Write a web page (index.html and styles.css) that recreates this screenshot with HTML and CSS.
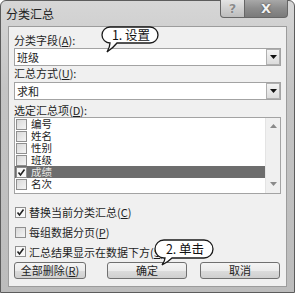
FILE: index.html
```html
<!DOCTYPE html>
<html lang="zh-CN">
<head>
    <meta charset="UTF-8">
    <title>分类汇总</title>
    <link rel="stylesheet" href="styles.css">
</head>
<body>
    <div class="window">
        <div class="titlebar">
            <span class="title">分类汇总</span>
            <div class="caption-btns">
                <div class="cap help">?</div>
                <div class="cap close">X</div>
            </div>
        </div>

        <div class="panel">
            <div class="label l1">分类字段(<u>A</u>):</div>
            <div class="combo">
                <span class="combo-text">班级</span>
                <span class="drop"><svg width="7" height="4" viewBox="0 0 7 4"><path d="M0 0H7L3.5 4Z" fill="#111"/></svg></span>
            </div>

            <div class="label l2">汇总方式(<u>U</u>):</div>
            <div class="combo">
                <span class="combo-text">求和</span>
                <span class="drop"><svg width="7" height="4" viewBox="0 0 7 4"><path d="M0 0H7L3.5 4Z" fill="#111"/></svg></span>
            </div>

            <div class="label l3">选定汇总项(<u>D</u>):</div>
            <div class="listbox">
                <div class="items">
                    <div class="item"><span class="cb"></span>编号</div>
                    <div class="item"><span class="cb"></span>姓名</div>
                    <div class="item"><span class="cb"></span>性别</div>
                    <div class="item"><span class="cb"></span>班级</div>
                    <div class="item selected"><span class="cb checked"><svg width="9" height="9" viewBox="0 0 9 9"><path d="M1.5 4.5L3.5 7L7.5 1.5" fill="none" stroke="#222" stroke-width="1.6"/></svg></span>成绩</div>
                    <div class="item"><span class="cb"></span>名次</div>
                </div>
                <div class="vscroll">
                    <svg width="7" height="4" viewBox="0 0 7 4"><path d="M0 4H7L3.5 0Z" fill="#8a8a8a"/></svg>
                    <svg width="7" height="4" viewBox="0 0 7 4"><path d="M0 0H7L3.5 4Z" fill="#8a8a8a"/></svg>
                </div>
            </div>

            <div class="options">
                <div class="opt"><span class="cb checked"><svg width="9" height="9" viewBox="0 0 9 9"><path d="M1.5 4.5L3.5 7L7.5 1.5" fill="none" stroke="#222" stroke-width="1.6"/></svg></span>替换当前分类汇总(<u>C</u>)</div>
                <div class="opt"><span class="cb"></span>每组数据分页(<u>P</u>)</div>
                <div class="opt last"><span class="cb checked"><svg width="9" height="9" viewBox="0 0 9 9"><path d="M1.5 4.5L3.5 7L7.5 1.5" fill="none" stroke="#222" stroke-width="1.6"/></svg></span>汇总结果显示在数据下方(<u>S</u>)</div>
            </div>

            <div class="buttons">
                <div class="btn b1">全部删除(<u>R</u>)</div>
                <div class="btn b2">确定</div>
                <div class="btn b3">取消</div>
            </div>
        </div>

        <!-- callouts over the dialog -->
        <div class="callout c1">
            <svg width="58" height="28" viewBox="0 0 58 28"><path d="M9 1H49A8 8 0 0 1 49 17H16Q12 22 6 26Q9 21 9 17A8 8 0 0 1 9 1Z" fill="#fff" stroke="#1a1a1a" stroke-width="1.3"/></svg>
            <span class="callout-text">1. 设置</span>
        </div>
        <div class="callout c2">
            <svg width="60" height="28" viewBox="0 0 60 28"><path d="M10 1H50A9 9 0 0 1 50 19H18Q14 23 8 26Q11 22 11 19H10A9 9 0 0 1 10 1Z" fill="#fff" stroke="#1a1a1a" stroke-width="1.3"/></svg>
            <span class="callout-text">2. 单击</span>
        </div>
    </div>
</body>
</html>
```

FILE: styles.css
```css
body {
    margin: 0;
    background-color: #fff;
    font-family: "Noto Sans CJK SC", "DejaVu Sans", sans-serif;
    font-size: 11px;
    color: #1e1e1e;
}
u {
    text-decoration: underline;
    text-underline-offset: 1px;
}
.window {
    position: relative;
    width: 295px;
    height: 293px;
    box-sizing: border-box;
    border: 1px solid #5c5c5c;
    border-radius: 6px 6px 0 0;
    background: linear-gradient(#d6d6d6, #c4c4c4 30%, #bcbcbc);
    padding: 0 7px 5px 7px;
}
.titlebar {
    height: 25px;
    margin: 0 -7px;
    display: flex;
    justify-content: space-between;
    align-items: flex-start;
}
.title {
    padding-left: 5px;
    line-height: 25px;
    font-size: 12px;
    color: #222;
}
.caption-btns {
    display: flex;
    margin-top: -1px;
    margin-right: 6px;
}
.cap {
    height: 18px;
    box-sizing: border-box;
    border: 1px solid #666;
    border-top: none;
    text-align: center;
    line-height: 17px;
    font-family: "DejaVu Sans", sans-serif;
    font-weight: bold;
}
.help {
    width: 25px;
    border-radius: 0 0 0 4px;
    background: linear-gradient(#e4e4e4, #cfcfcf 50%, #bdbdbd);
    color: #8a8a8a;
    font-size: 13px;
    text-shadow: 0 0 1px #fff;
}
.close {
    width: 43px;
    border-left: none;
    border-radius: 0 0 4px 0;
    background: linear-gradient(#a8a8a8, #8c8c8c 50%, #7a7a7a);
    color: #f2f2f2;
    font-size: 13px;
    text-shadow: 0 0 2px #333;
}
.panel {
    height: 261px;
    box-sizing: border-box;
    border: 1px solid #9c9c9c;
    background-color: #f0f0f0;
    padding: 0 5px;
}
.label {
    line-height: 14px;
    white-space: nowrap;
}
.l1 {
    margin-top: 6px;
    height: 15px;
    line-height: 15px;
}
.l2 {
    height: 16px;
}
.l3 {
    height: 14px;
    padding-top: 3px;
}
.combo {
    height: 18px;
    box-sizing: border-box;
    border: 1px solid #a3a3a3;
    background-color: #fff;
    display: flex;
    align-items: center;
}
.combo-text {
    padding-left: 2px;
    line-height: 16px;
}
.drop {
    margin-left: auto;
    width: 14px;
    height: 16px;
    box-sizing: border-box;
    border: 1px solid #b0b0b0;
    background: linear-gradient(#f4f4f4, #dcdcdc);
    display: flex;
    align-items: center;
    justify-content: center;
}
.listbox {
    height: 77px;
    box-sizing: border-box;
    border: 1px solid #a3a3a3;
    background-color: #fff;
    display: flex;
    overflow: hidden;
}
.items {
    flex: 1;
}
.item {
    height: 12px;
    line-height: 12px;
    display: flex;
    align-items: center;
    padding-left: 1px;
    white-space: nowrap;
    font-family: "Liberation Sans", "Noto Sans CJK SC", sans-serif;
    font-size: 10.5px;
}
.item.selected {
    background-color: #6d6d6d;
    color: #e6e6e6;
}
.cb {
    width: 11px;
    height: 11px;
    box-sizing: border-box;
    border: 1px solid #8f8f8f;
    background: linear-gradient(135deg, #d9d9d9, #f4f4f4);
    margin-right: 4px;
    flex-shrink: 0;
    display: flex;
    align-items: center;
    justify-content: center;
}
.cb.checked {
    background: #f8f8f8;
}
.vscroll {
    width: 15px;
    background-color: #f0f0f0;
    border-left: 1px solid #e4e4e4;
    display: flex;
    flex-direction: column;
    align-items: center;
    justify-content: space-between;
    padding: 6px 0 7px;
    box-sizing: border-box;
}
.options {
    margin-top: 8px;
}
.opt {
    height: 20px;
    line-height: 20px;
    display: flex;
    align-items: center;
    padding-left: 1px;
    white-space: nowrap;
}
.opt .cb {
    margin-right: 3px;
}
.opt.last {
    height: 19px;
}
.buttons {
    display: flex;
    margin-top: 1px;
}
.btn {
    height: 17px;
    box-sizing: border-box;
    border: 1px solid #707070;
    border-radius: 3px;
    background: linear-gradient(#f4f4f4, #ebebeb 50%, #dcdcdc 51%, #cfcfcf);
    text-align: center;
    line-height: 15px;
    white-space: nowrap;
}
.b1 {
    width: 72px;
}
.b2 {
    width: 80px;
    margin-left: 21px;
}
.b3 {
    width: 80px;
    margin-left: 13px;
}
.callout {
    position: absolute;
    height: 28px;
}
.callout svg {
    display: block;
}
.callout-text {
    position: absolute;
    left: 2px;
    right: 0;
    top: 1px;
    text-align: center;
    font-size: 12.5px;
    color: #111;
}
.c1 {
    left: 100px;
    top: 25px;
    width: 58px;
}
.c1 .callout-text {
    line-height: 16px;
}
.c2 {
    left: 153px;
    top: 238px;
    width: 60px;
}
.c2 .callout-text {
    line-height: 18px;
}
```
